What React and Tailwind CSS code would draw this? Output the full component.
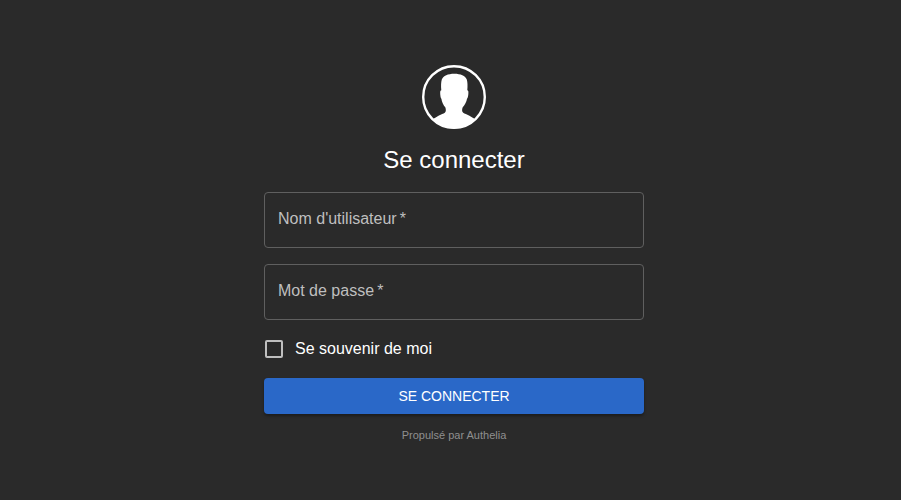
function UserLogo() {
  return (
    <svg viewBox="0 0 64 64" className="size-16" aria-hidden="true">
      <circle cx="32" cy="32" r="30.8" fill="none" stroke="#fff" strokeWidth="2.4" />
      <path
        fill="#fff"
        d="M11 54.5C14 51.5 20 49.500 22.8 47.8C24.2 46.8 24 44.5 23.4 42.5C21.200 40 19.8 36.5 19.400 33.8C18.400 32.8 18 28 18.300 26.2C18.500 25.6 18.900 25.4 19.300 25.200C18.900 21 19 17 19.800 14.500C21.300 10.900 26 8.8 32.3 8.8C38.6 8.8 43.300 10.900 44.800 14.500C45.600 17 45.700 21 45.300 25.200C45.700 25.4 46.200 25.6 46.300 26.2C46.600 28 46.200 32.8 45 33.8C44.600 36.5 42.8 40 40.6 42.5C39.9 44.5 39.8 46.8 41.2 47.8C44 49.5 50 51.5 53 54.5C47.5 60.5 40 63.5 32 63.5C24 63.5 16.5 60.5 11 54.5Z"
      />
    </svg>
  );
}

function Field({ id, label, type, autoComplete }) {
  return (
    <div className="relative">
      <input
        id={id}
        name={id}
        type={type}
        autoComplete={autoComplete}
        required
        placeholder=" "
        className="peer block h-14 w-full rounded border border-[#5f5f5f] bg-transparent px-[13px] text-base text-white outline-none focus:border-[#2a68c8]"
      />
      <label
        htmlFor={id}
        className="pointer-events-none absolute left-3 top-[15px] bg-[#2a2a2a] px-0.5 text-base leading-6 text-[#bfbfbf] peer-focus:-top-3 peer-focus:text-xs peer-focus:leading-6 peer-not-placeholder-shown:-top-3 peer-not-placeholder-shown:text-xs peer-not-placeholder-shown:leading-6"
      >
        {label}
        <span aria-hidden="true">{"\u2009*"}</span>
      </label>
    </div>
  );
}

export default function App() {
  return (
    <div className="flex min-h-screen items-center justify-center bg-[#2a2a2a] pl-[7px] font-['Liberation_Sans',Arial,sans-serif] text-white">
      <main className="flex w-full max-w-[380px] flex-col items-center pt-2">
        <UserLogo />
        <h1 className="mt-[15px] text-2xl leading-8 font-normal">Se connecter</h1>
        <form className="mt-4 flex w-full flex-col" onSubmit={(e) => e.preventDefault()}>
          <div className="flex flex-col gap-4">
            <Field id="username" label="Nom d'utilisateur" type="text" autoComplete="username" />
            <Field id="password" label="Mot de passe" type="password" autoComplete="current-password" />
          </div>
          <label className="mt-[17px] flex items-center gap-3 self-start pl-px text-base leading-6">
            <input
              type="checkbox"
              name="remember"
              className="size-[18px] appearance-none rounded-xs border-2 border-[#bfbfbf] checked:bg-[#2a68c8]"
            />
            Se souvenir de moi
          </label>
          <button
            type="submit"
            className="mt-[17px] h-9 rounded bg-[#2a68c8] text-sm uppercase shadow-[0_2px_3px_rgba(0,0,0,0.35)]"
          >
            Se connecter
          </button>
        </form>
        <a href="#authelia" className="mt-[13px] text-[11px] leading-4 text-[#8f8f8f]">
          Propulsé par Authelia
        </a>
      </main>
    </div>
  );
}
